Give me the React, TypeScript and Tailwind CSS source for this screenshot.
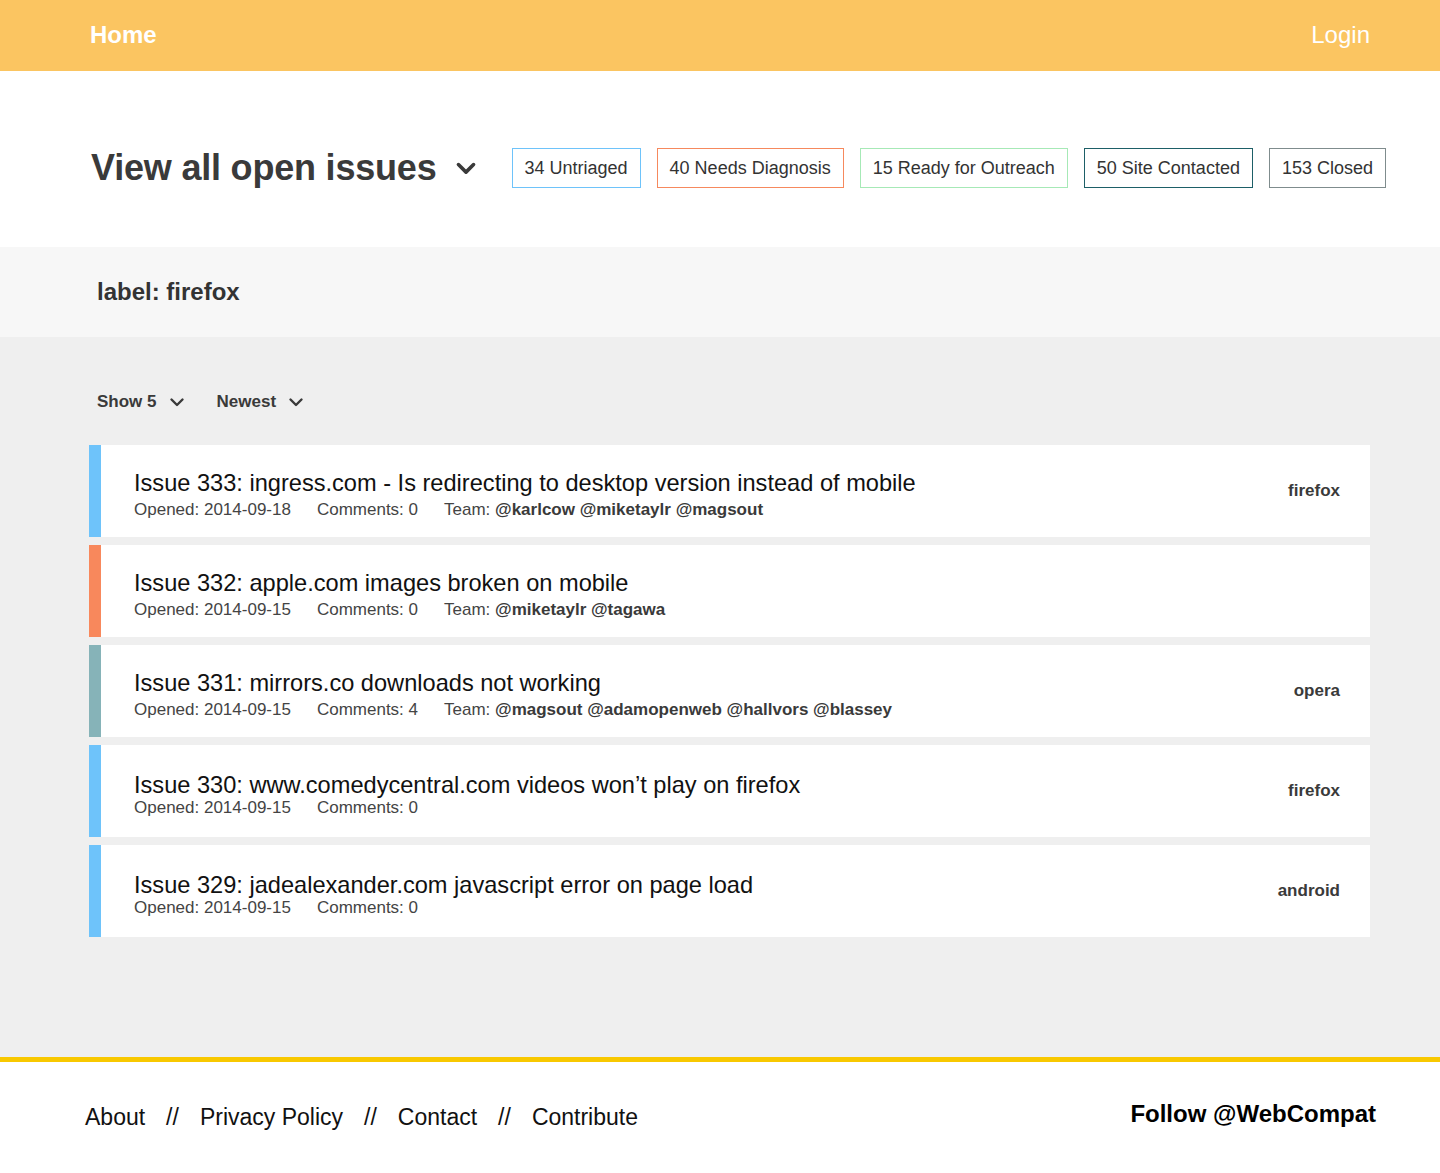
import React from "react";

type Issue = {
    number: number;
    title: string;
    opened: string;
    comments: number;
    team?: string[];
    label?: string;
    bar: string;
};

const issues: Issue[] = [
    {
        number: 333,
        title: "ingress.com - Is redirecting to desktop version instead of mobile",
        opened: "2014-09-18",
        comments: 0,
        team: ["@karlcow", "@miketaylr", "@magsout"],
        label: "firefox",
        bar: "bg-[#6ec3fa]",
    },
    {
        number: 332,
        title: "apple.com images broken on mobile",
        opened: "2014-09-15",
        comments: 0,
        team: ["@miketaylr", "@tagawa"],
        bar: "bg-[#f8885c]",
    },
    {
        number: 331,
        title: "mirrors.co downloads not working",
        opened: "2014-09-15",
        comments: 4,
        team: ["@magsout", "@adamopenweb", "@hallvors", "@blassey"],
        label: "opera",
        bar: "bg-[#86b3b8]",
    },
    {
        number: 330,
        title: "www.comedycentral.com videos won’t play on firefox",
        opened: "2014-09-15",
        comments: 0,
        label: "firefox",
        bar: "bg-[#6ec3fa]",
    },
    {
        number: 329,
        title: "jadealexander.com javascript error on page load",
        opened: "2014-09-15",
        comments: 0,
        label: "android",
        bar: "bg-[#6ec3fa]",
    },
];

const filters = [
    { text: "34 Untriaged", border: "border-[#6ec3fa]" },
    { text: "40 Needs Diagnosis", border: "border-[#f6895d]" },
    { text: "15 Ready for Outreach", border: "border-[#a6e9b6]" },
    { text: "50 Site Contacted", border: "border-[#1d5f67]" },
    { text: "153 Closed", border: "border-[#7f8c8d]" },
];

const Chevron: React.FC<{ size?: number; stroke?: number }> = ({ size = 14, stroke = 2.4 }) => (
    <svg width={size} height={size} viewBox="0 0 16 16" fill="none">
        <path d="M2.5 5.5 L8 11 L13.5 5.5" stroke="#3a3a3a" strokeWidth={stroke} strokeLinecap="round" strokeLinejoin="round" />
    </svg>
);

const IssueCard: React.FC<{ issue: Issue }> = ({ issue }) => (
    <div className="flex h-[92px] bg-white">
        <div className={`w-3 shrink-0 ${issue.bar}`} />
        <div className="flex flex-1 items-center justify-between pl-[33px] pr-[30px]">
            <div className="flex flex-col pt-2">
                <div className="text-[23.6px] leading-[28px] text-[#111]">
                    Issue {issue.number}: {issue.title}
                </div>
                <div className={`flex gap-[26px] text-[17px] leading-[20px] text-[#444] ${issue.team ? "mt-[3px]" : "-mt-[1px]"}`}>
                    <span>Opened: {issue.opened}</span>
                    <span>Comments: {issue.comments}</span>
                    {issue.team && (
                        <span>
                            Team: <span className="font-bold text-[#3a3a3a]">{issue.team.join(" ")}</span>
                        </span>
                    )}
                </div>
            </div>
            {issue.label && (
                <div className="text-[17px] font-bold text-[#3a3a3a]">{issue.label}</div>
            )}
        </div>
    </div>
);

const App: React.FC = () => {
    return (
        <div className="min-h-[1173px] flex flex-col bg-white font-['Liberation_Sans',Arial,sans-serif]">
            {/* Header */}
            <header className="h-[71px] bg-[#fbc561] flex items-center justify-between pl-[90px] pr-[70px]">
                <span className="text-[24px] font-bold text-white -mt-[2px]">Home</span>
                <span className="text-[24px] text-white -mt-[2px]">Login</span>
            </header>

            {/* Title + filters */}
            <section className="h-[176px] pt-[18px] flex items-center justify-between pl-[91px] pr-[54px]">
                <div className="flex items-center gap-[18px]">
                    <h1 className="text-[36px] font-bold text-[#3a3a3a] tracking-[-0.2px]">View all open issues</h1>
                    <Chevron size={22} stroke={2.6} />
                </div>
                <div className="flex gap-4">
                    {filters.map((f) => (
                        <button
                            key={f.text}
                            className={`h-10 border ${f.border} px-[12px] text-[18px] text-[#333] bg-white`}
                        >
                            {f.text}
                        </button>
                    ))}
                </div>
            </section>

            {/* Label bar */}
            <section className="h-[90px] bg-[#f7f7f7] flex items-center pl-[97px]">
                <h2 className="text-[24px] font-bold text-[#333]">label: firefox</h2>
            </section>

            {/* Issue list */}
            <main className="flex-1 bg-[#efefef] pl-[89px] pr-[70px] pt-[52px] pb-[120px]">
                <div className="flex items-center gap-[32px] pl-2 mb-[30px]">
                    <div className="flex items-center gap-[12px] text-[17px] font-bold text-[#3a3a3a]">
                        Show 5 <Chevron size={16} />
                    </div>
                    <div className="flex items-center gap-[12px] text-[17px] font-bold text-[#3a3a3a]">
                        Newest <Chevron size={16} />
                    </div>
                </div>
                <div className="flex flex-col gap-2">
                    {issues.map((issue) => (
                        <IssueCard key={issue.number} issue={issue} />
                    ))}
                </div>
            </main>

            {/* Footer */}
            <footer className="h-[116px] border-t-[5px] border-[#f8c800] bg-white flex items-center justify-between pl-[85px] pr-[64px]">
                <div className="flex items-center text-[23px] text-[#111]">
                    <span>About</span>
                    <span className="mx-[21px]">//</span>
                    <span>Privacy Policy</span>
                    <span className="mx-[21px]">//</span>
                    <span>Contact</span>
                    <span className="mx-[21px]">//</span>
                    <span>Contribute</span>
                </div>
                <div className="text-[24px] font-bold text-black -mt-2">Follow @WebCompat</div>
            </footer>
        </div>
    );
};

export default App;
